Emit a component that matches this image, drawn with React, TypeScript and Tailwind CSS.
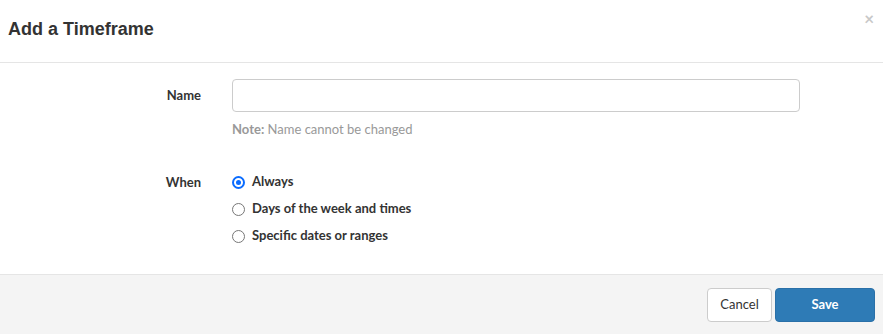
export default function App() {
  return (
    <div className="w-[883px] h-[334px] bg-white flex flex-col font-['Lato','Liberation_Sans',sans-serif] text-[#333]">
      {/* header */}
      <div className="relative h-[63px] shrink-0 border-b border-[#e5e5e5] flex items-center px-2">
        <h1 className="font-['Liberation_Sans',Arial,sans-serif] text-[18px] font-bold text-[#333] pb-[3px]">
          Add a Timeframe
        </h1>
        <button className="absolute right-[9px] top-[10px] text-[#c8c8c8] text-[17px] leading-none font-bold">
          ×
        </button>
      </div>

      {/* body */}
      <div className="flex-1 pt-[16px]">
        <div className="flex items-center">
          <label className="w-[201px] text-right text-[13px] font-bold text-[#333]">Name</label>
          <input
            type="text"
            className="ml-[31px] w-[568px] h-[33px] rounded-[4px] border border-[#cccccc] px-2 text-sm outline-none"
          />
        </div>
        <div className="ml-[232px] mt-[8px] text-[13px] text-[#999]">
          <span className="font-bold">Note:</span> Name cannot be changed
        </div>

        <div className="flex mt-[29px]">
          <div className="w-[201px] text-right text-[13px] font-bold text-[#333] leading-[27px]">When</div>
          <div className="ml-[31px] flex flex-col">
            {["Always", "Days of the week and times", "Specific dates or ranges"].map((t, i) => (
              <label key={t} className="flex items-center h-[27px] text-[13px] font-bold text-[#333]">
                {i === 0 ? (
                  <span className="w-[13px] h-[13px] rounded-full border-2 border-[#0a6cff] bg-white flex items-center justify-center">
                    <span className="w-[5px] h-[5px] rounded-full bg-[#0a6cff]" />
                  </span>
                ) : (
                  <span className="w-[13px] h-[13px] rounded-full border border-[#777] bg-white" />
                )}
                <span className="ml-[7px]">{t}</span>
              </label>
            ))}
          </div>
        </div>
      </div>

      {/* footer */}
      <div className="h-[60px] shrink-0 border-t border-[#e5e5e5] bg-[#f4f4f4] flex items-center justify-end gap-[3px] pr-[8px]">
        <button className="w-[65px] h-[34px] rounded-[4px] border border-[#cccccc] bg-white text-[13px] text-[#333]">
          Cancel
        </button>
        <button className="w-[100px] h-[34px] rounded-[4px] bg-[#2e7bb6] border border-[#2a70a8] text-[13px] font-bold text-white">
          Save
        </button>
      </div>
    </div>
  );
}
